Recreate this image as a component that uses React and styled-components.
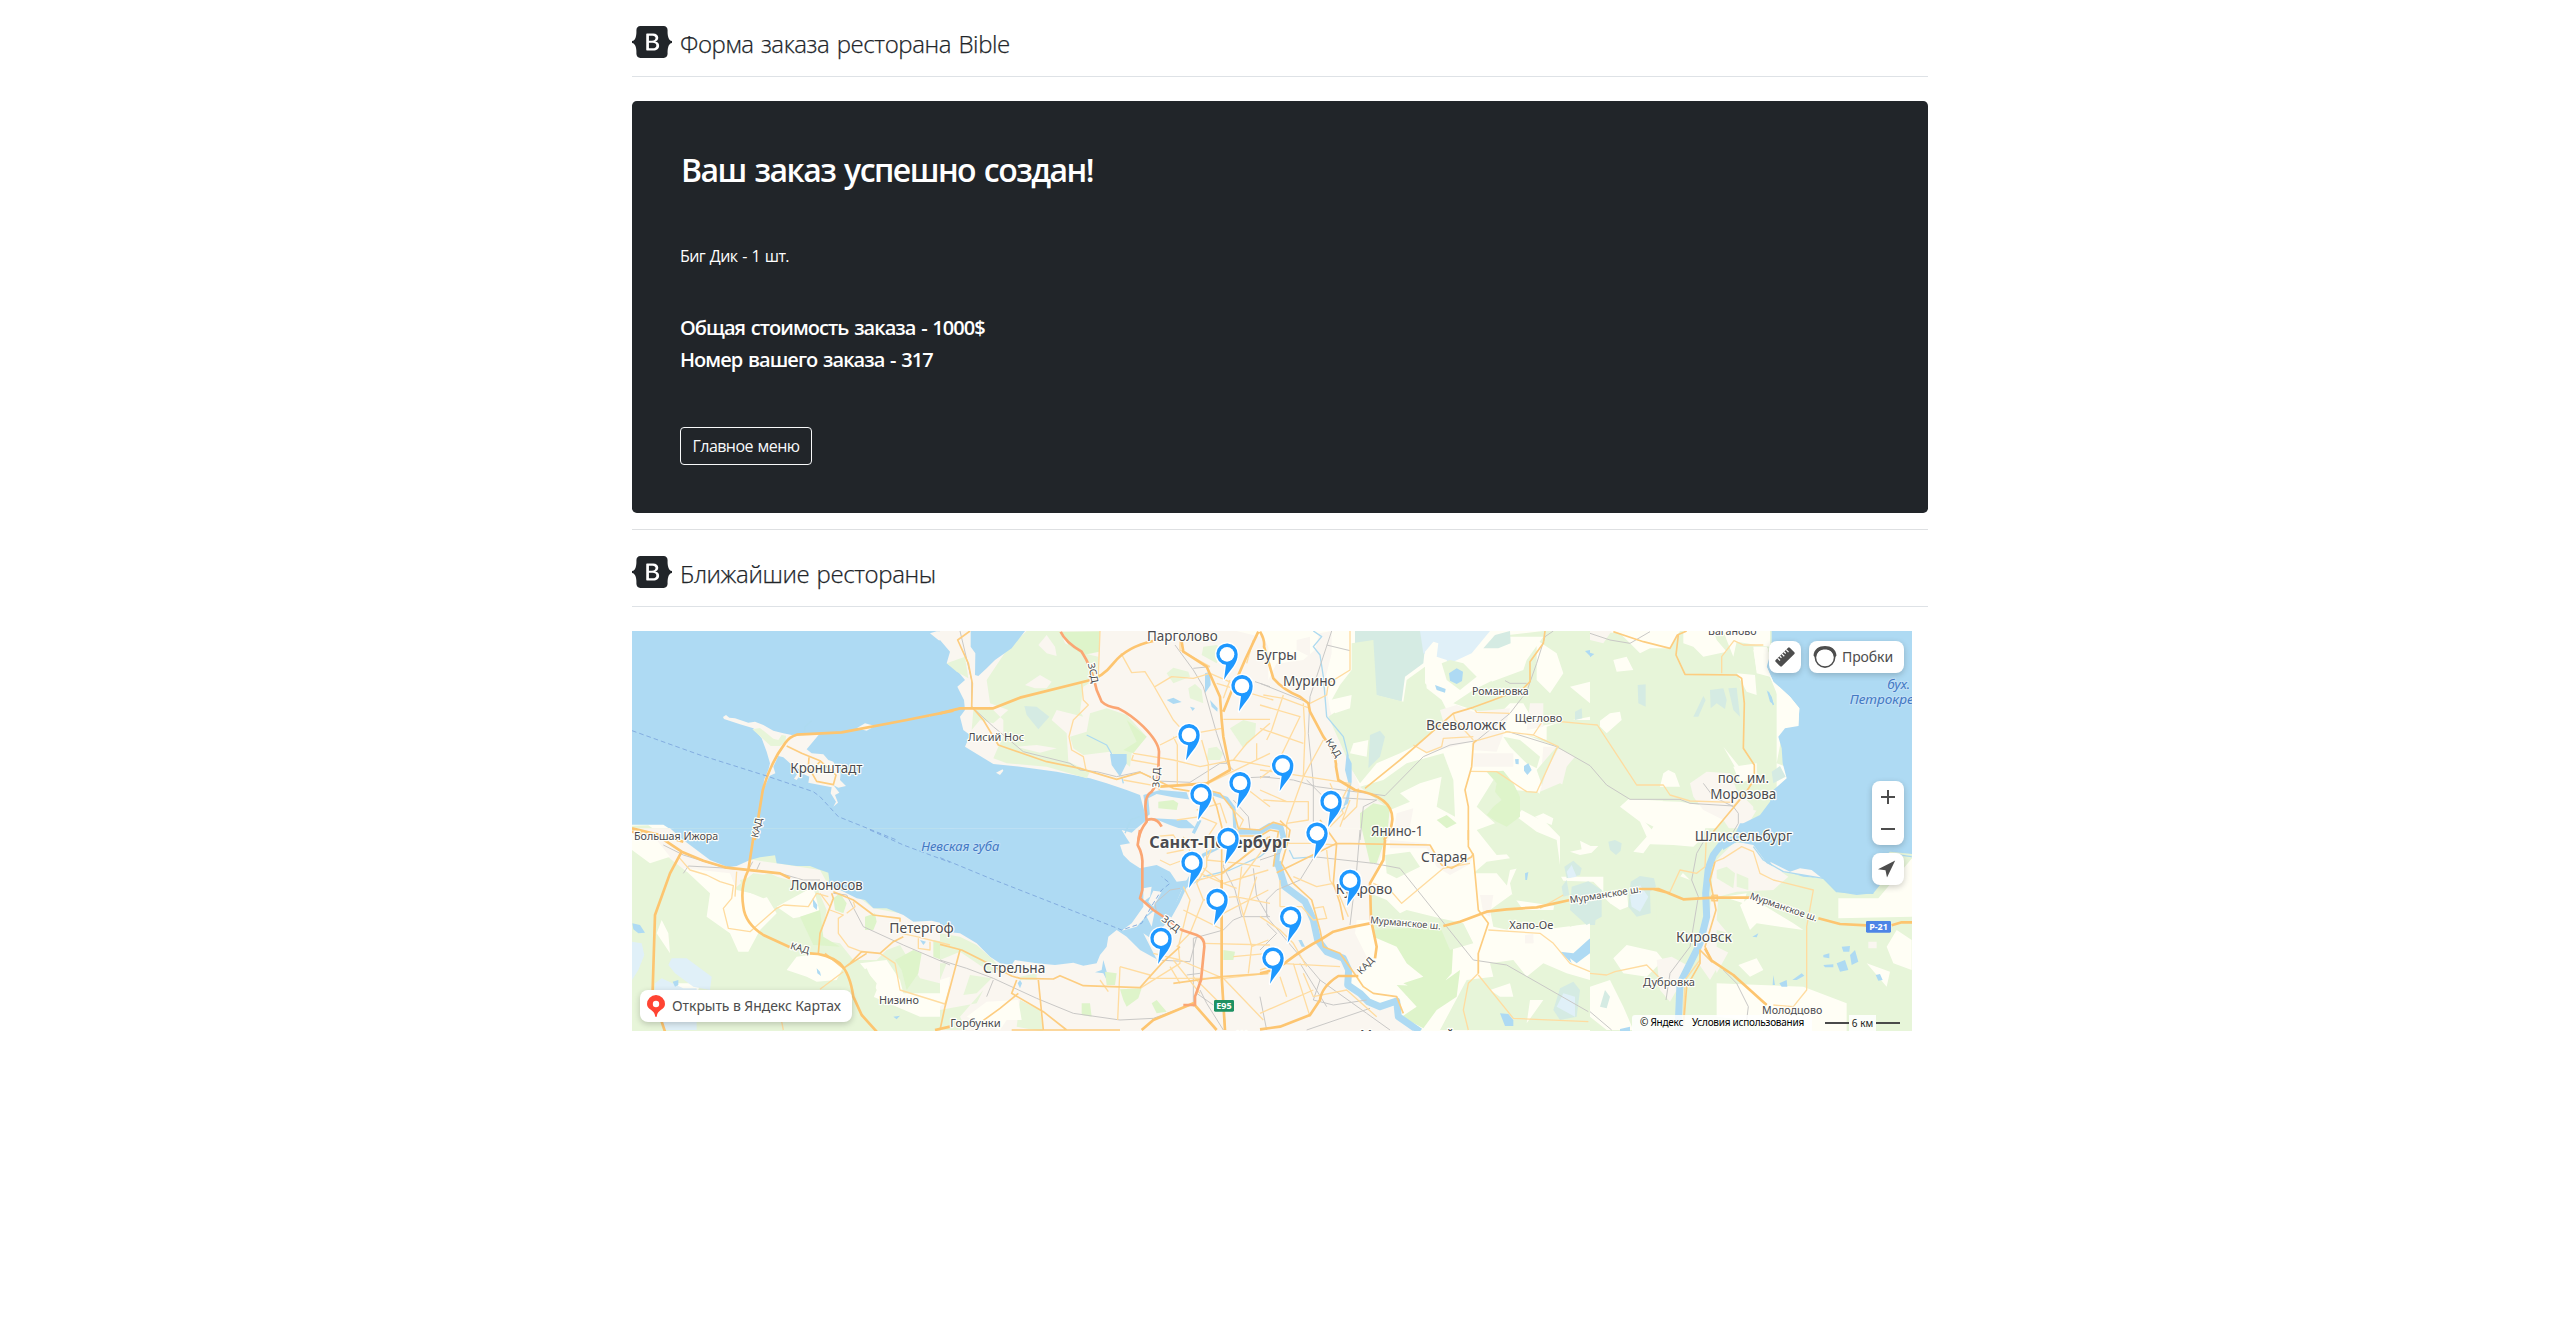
import React from "react";
import styled, { createGlobalStyle } from "styled-components";

const GlobalStyle = createGlobalStyle`
  *, *::before, *::after { box-sizing: border-box; }
  body {
    margin: 0;
    background: #fff;
    color: #212529;
    font-family: "Open Sans", "Noto Sans", sans-serif;
    font-size: 16px;
    line-height: 1.5;
  }
`;

const Container = styled.main`
  width: 1320px;
  margin: 0 auto;
  padding: 24px 12px;
`;

const SectionHeader = styled.header`
  display: flex;
  align-items: center;
  height: 53px;
  margin-bottom: 24px;
  padding-bottom: 16px;
  border-bottom: 1px solid #dee2e6;
`;

const SectionTitle = styled.span`
  padding-top: 3px;
  font-size: 24px;
  font-weight: 350;
  line-height: 36px;
  letter-spacing: ${(p) => p.$tracking};
  word-spacing: 1.5px;
  white-space: nowrap;
  -webkit-text-stroke: 0.25px currentColor;
`;

const LogoSvg = styled.svg`
  display: block;
  width: 40px;
  height: 32px;
  margin-right: 8px;
  fill: currentColor;
`;

const OrderCard = styled.section`
  display: flex;
  flex-direction: column;
  align-items: flex-start;
  height: 412px;
  padding: 48px;
  border-radius: 4.8px;
  background: #212529;
  color: #fff;
`;

const OrderTitle = styled.h2`
  margin: 2px 0 55px 1px;
  font-size: 32px;
  font-weight: 600;
  line-height: 38px;
  letter-spacing: -1.55px;
  word-spacing: 2px;
`;

const OrderItem = styled.p`
  margin: 0 0 48px;
  line-height: 24px;
  letter-spacing: -0.6px;
  word-spacing: 1.2px;
`;

const OrderTotal = styled.h5`
  margin: 0 0 8px;
  font-size: 20px;
  font-weight: 600;
  line-height: 24px;
  letter-spacing: ${(p) => p.$tracking};
  word-spacing: 1.5px;
`;

const MenuButton = styled.button`
  width: 132px;
  height: 38px;
  margin-top: auto;
  padding: 0;
  border: 1px solid #f8f9fa;
  border-radius: 4px;
  background: transparent;
  color: #f8f9fa;
  font: inherit;
  letter-spacing: -0.55px;
  word-spacing: 1px;
  white-space: nowrap;
`;

const Divider = styled.hr`
  height: 1px;
  margin: 16px 0 24px;
  border: 0;
  background: #dee0e2;
`;

const MapFrame = styled.div`
  position: relative;
  width: 1280px;
  height: 400px;
  overflow: hidden;
  font-family: "Noto Sans", sans-serif;
  color: #4d4d4d;
`;

const MapSvg = styled.svg`
  display: block;
  width: 1280px;
  height: 400px;
`;

const Control = styled.button`
  position: absolute;
  top: ${(p) => p.$top}px;
  left: ${(p) => p.$left}px;
  display: flex;
  align-items: center;
  justify-content: ${(p) => (p.$text ? "flex-start" : "center")};
  width: ${(p) => p.$width}px;
  height: ${(p) => p.$height || 32}px;
  padding: ${(p) => (p.$text ? "0 4px" : "0")};
  border: 0;
  border-radius: 8px;
  background: #fff;
  box-shadow: 0 2px 6px rgba(0, 0, 0, 0.2);
  color: #4d4d4d;
  font: 14px/32px "Noto Sans", sans-serif;
  letter-spacing: ${(p) => p.$tracking || 0};
  white-space: nowrap;
`;

const ControlText = styled.span`
  margin-left: ${(p) => p.$gap}px;
`;

const Copyright = styled.div`
  position: absolute;
  right: 100px;
  bottom: 0;
  display: flex;
  gap: 9px;
  width: 180px;
  height: 16px;
  padding-left: 8px;
  border-radius: 3px 0 0 0;
  background: rgba(255, 255, 255, 0.85);
  color: #000;
  font-size: 10px;
  line-height: 15px;
  letter-spacing: -0.25px;
  white-space: nowrap;
`;

const Scale = styled.div`
  position: absolute;
  right: 12px;
  bottom: 0;
  display: flex;
  align-items: center;
  width: 75px;
  height: 16px;
  color: #222;
  font-size: 10px;
  white-space: nowrap;
`;

const ScaleBar = styled.i`
  flex: 1;
  height: 2px;
  background: #4a4a4a;
`;

const ScaleText = styled.span`
  padding: 0 3px;
  background: rgba(255, 255, 255, 0.85);
  line-height: 16px;
`;

const Logo = () => (
  <LogoSvg viewBox="0 0 118 94">
    <path
      fillRule="evenodd"
      clipRule="evenodd"
      d="M24.509 0c-6.733 0-11.715 5.893-11.492 12.284.214 6.14-.064 14.092-2.066 20.577C8.943 39.365 5.547 43.485 0 44.014v5.972c5.547.529 8.943 4.649 10.951 11.153 2.002 6.485 2.28 14.437 2.066 20.577C12.794 88.106 17.776 94 24.51 94H93.5c6.733 0 11.714-5.893 11.491-12.284-.214-6.14.064-14.092 2.066-20.577 2.009-6.504 5.396-10.624 10.943-11.153v-5.972c-5.547-.529-8.934-4.649-10.943-11.153-2.002-6.484-2.28-14.437-2.066-20.577C105.214 5.894 100.233 0 93.5 0H24.508zM80 57.863C80 66.663 73.436 72 62.543 72H44a2 2 0 01-2-2V24a2 2 0 012-2h18.437c9.083 0 15.044 4.92 15.044 12.474 0 5.302-4.01 10.049-9.119 10.88v.277C75.317 46.394 80 51.21 80 57.863zM60.521 28.34H49.948v14.934h8.905c6.884 0 10.68-2.772 10.68-7.727 0-4.643-3.264-7.207-9.012-7.207zM49.948 49.2v16.458H60.91c7.167 0 10.964-2.876 10.964-8.281 0-5.406-3.903-8.178-11.425-8.178H49.948z"
    />
  </LogoSvg>
);

const W = "#aedaf3";
const U = "#faf6f0";
const L = "#fffef5";
const G = "#e7f5d9";
const K = "#def4ca";
const T = "#d5ebe3";
const P = "#e0f0f8";

// Line kinds: colour and width in map units (three units to a pixel).
const WATERWAYS = {
  river: [W, 21],
  neva: [W, 17],
  canal: [W, 10],
  brook: ["#addaf0", 4],
};

const ROADS = {
  rail: ["#c9c8c6", 3],
  minor: ["#ffdca0", 4],
  road: ["#fdcd80", 5],
  main: ["#fdc570", 8],
  toll: ["#fba673", 8],
  ferry: ["#83ade0", 3],
};

// The map is kept in sheets, each with its own offset.
const SHEETS = [
  {
    at: [-36, -33],
    areas: [
      [W, "M30,30H1000V660H30Z"],
      [U, "M309,291L318,285L328,293L345,295L385,308L405,305L430,315L460,332L490,340L515,345L600,340L560,388L575,400L610,403L625,420L640,425L650,445L662,460L660,480L678,498L655,503L640,495L658,518L645,525L654,548L640,560L648,545L632,520L635,502L600,495L565,488L568,470L545,460L530,480L522,476L540,450L510,430L490,412L475,408L460,440L466,460L448,468L430,510L432,480L445,450L450,430L440,395L425,355L400,325L360,313L312,297Z"],
      [G, "M397,328L420,324L440,340L460,356L475,360L485,345L498,347L497,365L480,378L452,378L430,358Z"],
      [U, "M710,325L735,310L765,318L740,332ZM925,287L940,287L937,296Z"],
      [U, "M930,40L950,34H1000V95L980,90L975,70L955,60Z"],
      [G, "M970,132L990,122V142Z"],
      [L, "M30,614H130L170,640L185,662H30Z"],
      [G, "M36,617L85,616L115,637L90,645L36,633Z"],
    ],
    lines: [
      ["ferry", "M36,332L240,405L440,468L580,515L600,530L655,590L830,660"],
      ["main", "M1000,272L860,300L665,337L530,344Q508,350 495,370Q450,430 428,512L404,660"],
      ["road", "M500,378L545,400L600,422L648,465L640,494L590,484L565,440L567,412M575,450L600,425"],
      ["brook", "M553,338L555,320L575,302"],
      ["main", "M36,625L120,645L190,665"],
    ],
  },
  {
    at: [924, -33],
    areas: [
      [U, "M0,30H1000V665H0Z"],
      [W, "M-30,95L0,60L30,95L20,130L50,150L75,180L52,200L72,240L75,270L60,290L70,330L90,345L75,380L160,432L240,440L350,455L450,475L500,490L560,510L600,525L620,600L590,625L550,660H-30Z"],
      [G, "M200,90L260,33H360L375,70L430,100L475,110L470,175L430,200L420,275L430,290L350,270L335,300L380,340L385,425L450,455L440,475L320,440L200,430L160,415L175,380L190,350L190,300L150,260L100,270L95,330L120,300L160,310L205,270L150,250L140,180Z"],
      [U, "M295,75L320,45L345,80L350,108L320,100ZM255,195L300,165L335,185L320,205L285,205ZM228,380L290,375L350,385L300,398Z"],
      [G, "M20,130L75,110L85,175L50,155Z"],
      [W, "M92,33H255L215,85L165,120L140,145L115,168L105,165L106,100L92,80Z"],
      [K, "M365,35L480,34L477,95L430,105L385,75Z"],
      [G, "M390,350L440,335L450,280L500,265L560,285L620,350L575,400L570,440L510,395L430,405L400,385Z"],
      [K, "M560,300L620,350L580,400L550,390L590,365Z"],
      [W, "M510,402L560,402L560,430L540,470L515,435ZM680,240L700,233L725,246L700,252ZM795,160L810,155L812,195L795,220ZM750,260L765,264L758,273ZM810,240L833,265L832,275L815,260Z"],
      [T, "M253,258L290,260L328,290L295,328L260,285Z"],
      [G, "M680,160L700,143L745,155L750,170L700,190ZM745,205L765,192L785,210L790,250L750,235ZM870,325L910,300L948,310L945,350L910,385ZM805,385L830,380L850,400L840,420L800,420ZM790,80L830,75L850,90L830,130L785,105Z"],
      [K, "M655,545L700,540L715,550L710,570L655,565Z"],
      [L, "M890,33H1000V80L960,50Z"],
      [U, "M168,458L188,448L190,452L180,465Z"],
      [W, "M610,525L660,510L740,517L750,545L730,565L690,580L640,575L620,590ZM640,595L740,600L780,635L760,640L690,615Z"],
      [U, "M625,535L650,522L700,532L760,540L765,580L730,590L660,580L630,590ZM635,605L680,620L740,650L640,655Z"],
      [K, "M655,545L700,540L715,550L710,570L655,565Z"],
    ],
    lines: [
      ["brook", "M440,345L470,360L500,375L515,402M545,470L550,490M570,600L600,590M555,640L570,605"],
      ["canal", "M760,640L780,600M815,520L860,535L882,565L885,635"],
      ["rail", "M60,33L95,180V260L160,320L250,395L390,430L420,450L470,455L530,470L600,455L650,483L750,487L840,430L860,430M705,75L760,150L790,200L830,340L860,430L880,450M880,475L990,470M760,145L810,140M880,540L925,590L930,630M945,185L990,200"],
      ["road", "M90,33L53,60L85,130L97,190L95,260L130,300L175,375L320,425L420,445L530,478L600,457L630,470L700,505L790,520"],
      ["minor", "M543,100L575,158L615,155L640,195L700,300L718,320M480,33L475,165M425,190L430,240L445,255L400,300L387,350L395,390L430,410L438,450M645,200L695,170L760,175L810,160L880,190M720,60V90L810,140M660,375L710,350L845,325M580,400L700,420L780,440L880,420L990,440M580,405L575,420L660,435M550,480L660,500L770,495M700,350L712,375V500M785,360L805,430V500M850,298H990M990,310L920,370L880,420M950,370V420M805,490L990,400M850,235L870,180M940,60L920,130M830,190L1000,240M710,600L780,590L830,610L800,655M870,560L910,600L880,660M925,510L990,560M770,570L840,550L860,610M640,495L660,510"],
      ["main", "M0,280L60,265H160L240,233L440,183Q485,175 520,130Q560,80 640,63M725,65L730,95L800,140L840,230L845,300L850,350L870,450L800,490L660,500M955,35L915,120L880,200L850,275"],
      ["road", "M800,490L830,560L840,600L855,660M800,510L840,520L880,570L895,625L960,630L1000,607L1040,618"],
      ["toll", "M362,35Q375,65 425,95Q455,140 470,210L485,245Q500,260 535,265Q575,285 610,320Q655,365 657,395L655,450Q655,490 635,515Q610,530 618,580L620,605Q600,630 595,660"],
      ["toll", "M620,600Q650,590 665,620"],
    ],
  },
  {
    at: [1884, -33],
    areas: [
      [L, "M0,30H1000V665H0Z"],
      [U, "M0,33L25,80V180L50,130L120,50L215,33V100L195,180L210,270L250,390L300,500L350,510L390,560L400,660H0Z"],
      [L, "M50,33H180L165,90L130,120L60,130Z"],
      [T, "M285,33H500L490,130L435,170L425,245L345,225L340,90L285,80Z"],
      [P, "M480,33H690L635,100L580,125L545,130L490,100Z"],
      [G, "M275,70L340,60L350,225L430,245L440,180L495,140L500,205L545,240L570,290L540,340L420,400L350,430L300,490L270,440L250,390L205,290L235,270L215,240L240,195L275,150Z"],
      [L, "M210,240L275,225L270,265L225,280ZM280,370L325,360L320,410L270,400ZM495,95L520,65L535,70L530,110L560,120L595,195L560,210L525,215L495,190Z"],
      [T, "M330,345L360,332L375,350L360,410L325,445Z"],
      [G, "M700,50L850,33H990V290L830,320L790,250L750,250L710,290L640,270L580,250L640,210L700,180L750,140Z"],
      [L, "M695,50H850L800,120L790,150L695,185ZM830,60L890,100L910,160L870,220L830,180ZM930,200L990,185V250Z"],
      [G, "M545,130L570,120L610,130L650,170L600,210L560,180Z"],
      [T, "M670,85L705,45L750,33L752,70L715,85Z"],
      [W, "M567,160L590,145L609,155L606,183L590,192L570,182ZM525,195L557,207L555,218L530,210ZM975,93L990,90V108Z"],
      [T, "M945,275L965,265L967,295L945,300Z"],
      [U, "M540,270L590,255L640,275L750,265L735,330L710,395L635,390V365L500,400L470,380L550,305ZM110,60L150,50L150,110L110,90ZM640,400H760V440L640,440ZM810,250H850V320L800,330ZM410,580L460,565L450,620L400,640ZM850,380H925L910,460L840,500Z"],
      [G, "M300,500L370,480L440,430L550,400L580,480L585,590L530,560L545,470L480,490L420,520L450,545L390,570Z"],
      [K, "M300,580L340,550L390,560L380,660H300ZM530,600L560,585L590,610L560,625Z"],
      [W, "M260,400L275,430L275,485L265,550L250,560L268,500L255,450Z"],
    ],
    lines: [
      ["brook", "M160,33L185,50L160,80L180,105L190,170L200,290L250,350L265,410M225,590L255,560"],
      ["rail", "M215,33L150,230L145,340L160,490V660M200,75L270,92M0,190L150,250M0,470L100,480L170,500L375,527L490,410L570,375L650,362L750,280L800,215L830,130L855,50L880,33M735,182L750,190H800M745,335L890,380L990,437M350,540L310,560L300,660M140,480L190,530L350,540"],
      ["minor", "M270,33V150L205,190L200,225L150,250M70,225L35,330L20,360M0,325L130,370M0,255L120,290L40,455M130,250L135,340L130,470L80,610V660M10,225L70,235L150,265M0,450L40,455L270,490L240,550L190,570M0,510L80,545H145V600L80,610M0,475L60,430M190,360L130,470M210,490L250,580L210,620M270,540L240,620M645,270L650,277L750,280M580,280L585,300L640,360M460,375L500,398L545,380L550,355L640,350M630,454L710,455L800,515L830,517L890,385L895,380L820,345L735,335M820,345L850,300L990,313M640,365L745,335M80,545L10,540M295,505L290,560L250,600"],
      ["road", "M315,505L420,420L580,280L640,262L700,240L790,205L810,185V125L850,70L855,33M650,360L640,370L635,440L615,510L625,560V660"],
      ["main", "M0,35Q15,60 12,80L40,175Q70,210 120,230L145,250L150,275L190,350Q230,400 228,440L235,480L285,510Q400,530 397,600L392,630L372,660"],
    ],
  },
  {
    at: [2874, -33],
    areas: [
      [G, "M0,30H970V665H0Z"],
      [L, "M0,33H270L240,85H180L150,100L90,40ZM280,33H370L380,60L410,95L340,110L310,80L280,70ZM400,33H540V80L500,75L440,65L430,110L410,60ZM490,80L530,80L560,160L630,240L625,318L575,320L600,290L540,170L500,160ZM440,160L495,165L500,225L470,215ZM20,310L60,280L90,275L95,300L50,340ZM70,120L110,110L130,150L80,155ZM210,500L220,460L235,450L255,460L270,500ZM90,560L115,540L270,545L330,555L420,575L370,640L350,660H130L190,640L200,625L150,600Z"],
      [L, "M430,440L500,430L500,470L450,490Z"],
      [U, "M300,490L350,455L420,460L440,510L500,570L470,620L440,660L400,600L340,570L310,530ZM0,33H65L40,70L0,60Z"],
      [L, "M400,380L460,455L440,450Z"],
      [T, "M143,195L167,193V260L145,250ZM360,210L400,205L410,240L405,267L380,250L362,265ZM310,290L340,228L347,240L325,290ZM415,205L440,203L450,290L430,270Z"],
      [W, "M530,210L545,230L552,255L540,245ZM0,98L13,102L0,112Z"],
      [L, "M545,545L560,505L598,472L588,440L560,430L575,350L600,325L633,322V262L606,228L560,185L560,560Z"],
      [W, "M545,33H966V665H440L460,610L510,585L540,545L550,510L590,475L578,430L575,385L565,350L585,325L625,318L628,265L600,230L550,185L530,140L545,90Z"],
      [L, "M490,90L535,85L530,140L550,185L600,230L628,265L625,318L615,313L575,312L600,290L570,245L540,170L500,150Z"],
      [T, "M545,455L570,438L587,470L550,490Z"],
      [G, "M490,540L520,545L515,575L490,570Z"],
    ],
    lines: [
      ["brook", "M535,215L542,232L550,255"],
      ["rail", "M0,40L60,60L120,70L180,35M0,437L50,495L120,538H270L300,550L430,558M340,490L370,530L430,560L445,580V610L430,635"],
      ["minor", "M0,313L22,315L140,495H220L240,525L300,543L430,547M395,160V110L432,62L460,75H520"],
      ["road", "M70,35L160,65L240,85L262,45L290,33M265,45L258,105L285,163L440,165L455,175L463,250L460,385L493,435V475L470,515L370,635"],
      ["minor", "M430,560L500,475"],
    ],
  },
  {
    at: [-36, 597],
    areas: [
      [G, "M30,-5H1000V610H30Z"],
      [U, "M36,-5H160L190,30L320,110L390,88L470,100L600,120L625,165L700,190L760,235L1000,280V470L900,445L840,345L800,360L770,390L700,390L660,340L600,330L620,240L590,170L470,140L400,130L350,170L200,125Z"],
      [L, "M36,0L110,30L150,80L90,100L36,60ZM190,115L330,130L350,180L440,200L470,250L420,300L385,365L355,365L330,310L260,260L270,190ZM470,230L580,170L600,250L520,265ZM500,420L530,380L600,370L670,410L650,450L590,455L560,440ZM720,400L800,390L840,450L850,490L960,490L990,480V560L900,560L760,500L770,460ZM110,310L125,270L145,310L150,370ZM170,460L240,460L235,480L180,480Z"],
      [W, "M150,-5L190,30L230,60L270,90L325,112L350,108L390,90L420,82L465,76L470,100L530,108L570,108L595,118L625,128L628,150L620,170L650,175L680,190L710,205L735,210L760,235L800,235L850,255L880,275L935,272L1000,288V-5Z"],
      [P, "M145,405L155,385H200L275,440L270,480L220,470L165,430ZM36,335L65,340L73,375L55,420L36,450ZM105,460L125,445L190,475H230V600H130L105,500Z"],
      [W, "M37,280L60,285L75,308L55,310L40,298ZM158,455L175,450V465L165,470ZM578,205L592,225L590,240L580,230ZM590,415L600,425L603,438L592,430ZM820,560L840,557L830,568ZM900,330L918,335L910,345Z"],
      [K, "M735,260L765,250L770,275L760,300H735ZM825,390L880,360L905,370L895,430L860,480L845,420ZM940,330L990,340V400L940,380ZM640,205L660,190L680,220L670,250L645,240ZM540,260L600,240L610,320L660,350L580,345Z"],
      [G, "M360,150L450,130L520,165L480,190L430,205L370,180ZM700,440L740,415L770,480L750,530L700,540Z"],
    ],
    lines: [
      ["rail", "M130,45L190,75L320,115L480,130L550,150H600M190,130L205,108L330,115M385,120L398,95M410,120L420,98M640,190L680,195L730,290L850,345L990,405"],
      ["ferry", "M750,0L850,45L990,97"],
      ["minor", "M175,80L210,120L260,135L300,155L340,167L335,205L310,235L325,295L390,305L430,270L470,235L490,225L565,230L590,190L625,200M350,125L345,200M630,240L670,255L655,265V310L685,350L725,365M600,478L670,425M630,230L600,190M680,250L705,230L700,215M780,370L825,400L840,480L975,522L990,470M845,310L890,320L990,345M895,325V355L930,360V335M490,600L485,575L500,550"],
      ["road", "M635,190L640,205L600,310L595,370M640,185L700,210L760,255L840,265V275M615,370L670,415L690,400L725,365L780,370L820,335L850,320M670,415L740,370"],
      ["main", "M36,5L130,28L185,65L250,92L320,113L480,130L510,145M185,65L150,130L105,255L98,480L110,530L135,605M402,10L385,120Q360,170 370,230Q375,280 430,315L510,352M570,370Q620,370 660,400Q690,430 700,500L725,555L770,605M945,600L990,590"],
    ],
  },
  {
    at: [924, 597],
    areas: [
      [U, "M0,-5H1000V610H0Z"],
      [W, "M0,-5H590L575,8L545,0L560,25L570,40L540,45L550,75L570,95L600,115L650,105L690,125L710,155L790,145L755,165L725,180L710,215L690,260L670,290L640,300L640,330L610,310L650,388L600,360L560,320L530,300L505,320L500,350L480,375L470,400L430,407L400,398L345,405L290,400L225,390L215,405L180,400L150,380L110,340L60,310L20,305L0,285Z"],
      [U, "M610,210L635,240L590,290L545,302L575,280L610,230ZM610,175L635,170L630,200L610,215ZM640,182L665,185L640,230L625,215ZM620,260L645,240L635,290ZM515,325L540,335L560,370L520,360Z"],
      [W, "M490,390L500,425L500,450L490,430L465,427L485,420ZM240,450L246,460L240,475L233,460Z"],
      [G, "M0,310L60,320L110,345L160,390L185,420L155,430L60,365L0,390Z"],
      [K, "M495,425L530,430L525,465H500ZM540,478L605,475L595,505L560,530L550,510ZM635,520L650,510L680,545L650,550ZM425,520L450,520L455,560L425,555ZM850,360L885,365L880,390H850Z"],
      [G, "M0,400H20L0,450ZM90,435L155,445L110,490L70,495ZM240,510L300,540L310,605L230,590ZM0,540L110,520L130,480L60,560L80,600H0ZM240,440L290,430L290,450H240Z"],
      [L, "M140,515L235,510L245,570L200,570L180,600L80,560ZM0,450L30,440L20,510L0,530Z"],
    ],
    lines: [
      ["canal", "M690,260L715,215L740,160L790,75L850,45L890,10"],
      ["brook", "M790,140L870,120L960,80L985,60"],
      ["ferry", "M0,83L150,145L520,290L545,300L605,280L640,220L665,180L690,160L665,140"],
      ["rail", "M0,390L80,415L160,445L290,505L400,550L540,570L640,565L750,525M160,450L140,500M880,0L850,110L885,180L905,260L880,270L850,300L760,325V530M905,260H990M650,250L645,220L690,180L720,175M650,390L750,395L770,320M780,430L740,435M780,480L800,520L850,600M940,115L950,200L985,260M770,490L820,525"],
      ["minor", "M660,90L690,105L730,90L770,100L850,160L890,175M540,410L630,435V445H840M540,410L533,570M480,450L505,485M730,170L750,210L715,350L720,400L600,475M640,370L720,390L850,445M800,20V110L770,160L790,210L750,310L710,350M790,210L885,200L990,220M760,155L850,130L985,20M790,340L990,345M905,110L895,200L935,350L925,430M950,140L910,260M850,250L985,180M730,20L780,130L850,160L985,120M830,20L800,90L900,100L960,110M720,460L690,410M700,390L780,490M850,445L985,430M850,445L970,570M850,530L760,440M640,20L700,15L730,60L680,70M935,350L985,330M880,380L985,370M730,240L770,260L850,300M990,30L900,150"],
      ["road", "M0,343L65,360L125,390L215,438L240,445L340,447L360,437L390,450L430,467L600,473L665,400L720,350M230,450L215,490L310,545L380,600M295,450L310,600M0,600L15,530L60,360M540,600L215,600M125,575L180,535L235,490"],
      ["road", "M845,0V440L855,600M990,20L900,90L845,130M700,460L845,440L985,430"],
      ["main", "M845,150V440L855,600M605,600L640,570L760,520L830,600"],
      ["toll", "M600,0L593,45Q610,75 607,110V180L600,205L640,240L685,270L725,300L770,315Q795,325 793,350L783,450L765,500V525L730,525"],
    ],
  },
  {
    at: [1884, 597],
    areas: [
      [L, "M0,-5H1000V610H0Z"],
      [U, "M0,-5H400L370,60L330,170L340,270L290,270L285,310L330,400L270,450L300,500L400,530L425,570L480,605H0Z"],
      [U, "M390,30L500,40L550,100L600,85L640,80L625,105L570,135L530,110L500,55L390,55Z"],
      [K, "M300,-25H385L375,30L350,100L330,100ZM340,270L440,265L540,290L580,340L575,430L540,470L490,490L430,460L490,440L440,400L410,350L340,320ZM410,465L530,470L600,420L590,500L530,540L490,595L425,560L470,530Z"],
      [G, "M375,75L450,65L480,110L410,145L380,130ZM330,190L380,210L420,250L440,240L540,265L610,280L640,340L570,360L540,290L340,300ZM640,130L680,95L750,85L680,0H990V300L840,320L700,290L690,240L760,190L710,130ZM690,400L760,390L800,440L850,400L920,430L990,450V600H540L620,450L700,440Z"],
      [L, "M750,120L850,100L900,140L880,240L790,240L740,170ZM690,480L750,460L760,500L720,500ZM810,510H850L800,580ZM870,30L905,15L895,50Z"],
      [T, "M880,540L900,475L940,455L960,480L950,560L900,570Z"],
      [P, "M890,530L910,490L945,500L945,560Z"],
      [W, "M900,365L940,370L990,325V370L950,400L930,385L935,400ZM720,550L745,552L760,570V588H735ZM115,330L125,330L135,350L125,350Z"],
      [U, "M660,195H700L690,260L670,250ZM795,320L820,315V340H795Z"],
      [L, "M750,290L840,300L1000,280V320L940,345L850,330L760,330L690,360Z"],
      [U, "M795,315L820,312V340H795Z"],
    ],
    lines: [
      ["neva", "M-75,6L0,5L30,-13L62,-8L70,20L52,70L48,110"],
      ["river", "M52,95L75,170L135,215L160,270L173,330L200,365L250,385L266,420L263,465L300,490L325,515L360,530L410,513L415,560L480,605"],
      ["brook", "M88,60L100,85L170,80"],
      ["rail", "M300,0L290,120L270,285M160,80L340,100L420,115L560,290L640,390L740,405L985,545M0,90L60,70M160,85L120,150L50,180L20,210V260L180,450L320,550L390,600M0,500L20,600M180,450L160,510L220,525L320,510M140,600L330,535M0,360L50,310L20,280M120,400L200,530"],
      ["minor", "M85,40H160L230,45M220,160L170,170L100,140M60,230H125L160,270L200,265L190,230L160,235M0,260L60,300L100,340L140,410M0,420L60,400L240,410M130,430L160,500L260,480L350,560M0,550L160,480M60,440L80,500M100,400L150,560M340,160L390,180L425,220L550,115L630,100M685,300L840,310L880,340L930,400L990,425M655,435L760,565L985,575M655,370V430L625,460L610,540L625,600M60,150V230M200,60L210,150L240,200L265,260M840,235L910,195"],
      ["road", "M-75,18L0,18L30,0L55,5L40,110M60,-28L90,0L85,30L65,100L100,160L155,210L180,300L190,350L240,370L290,440L310,470L340,490L410,500L430,550M180,-30L230,40L510,45L545,105L575,115L635,80L640,70M230,40L220,160L240,220L250,270M50,128L230,40"],
      ["road", "M625,0V50L640,75L655,240L685,280L655,370V430"],
      ["main", "M375,30L370,90L330,160L333,270L350,350L345,385M295,438H235Q185,470 180,510L150,555L60,590L0,598M0,430Q50,420 80,395Q140,350 180,330L220,305L270,292L330,280M550,288L600,275L680,245L740,238L830,232L930,210"],
    ],
  },
  {
    at: [2874, 597],
    areas: [
      [G, "M0,-5H970V610H0Z"],
      [L, "M170,20L200,-25H350L340,20L310,50L250,45L160,42ZM70,385L110,345L200,365L220,390L170,440L100,430ZM450,225L480,200L610,280L640,300L500,280L480,300ZM400,200L470,190L460,220ZM745,205H865L970,80V260L745,265ZM445,405L500,385L520,420L480,440ZM380,460L640,470L770,520V605H550L470,570L380,560ZM830,400L900,425L890,470ZM0,470L60,450L100,530L130,600H50L0,560ZM95,106L200,104L270,120L300,150L200,112ZM890,350L920,300L965,330V420L910,400Z"],
      [U, "M370,100L430,40L500,35L530,95L595,140L550,180L440,185L385,200L380,270L430,330L360,450L325,400L340,330L360,250ZM200,390L245,380L300,410L240,515L210,480ZM835,335L860,335V355H835ZM360,350L430,340L380,430Z"],
      [G, "M380,120L410,110L435,130L430,175L380,145ZM440,130L475,145V180L440,170ZM380,300L420,310L440,380L380,350Z"],
      [T, "M55,40L90,30L95,65L65,75ZM0,230L20,240L15,285H0ZM30,530L45,480L60,500L50,535Z"],
      [W, "M390,40L430,22L450,-20H966V72L900,65L860,100L870,165L850,190L800,195L740,185L700,145L640,140L560,115L530,100L490,45L440,35L400,60Z"],
      [U, "M540,95L600,125L630,115L665,120L700,148L640,135L560,125Z"],
      [W, "M755,350L780,348L778,365L760,365ZM780,375L795,360L805,395L785,405ZM740,400L765,390L775,420L750,425ZM700,375L718,370V385L700,382ZM700,405L730,403V412H705ZM857,435L870,432L878,450L865,452ZM607,450L635,430L643,437L620,450ZM550,435L555,465H548ZM568,460L590,450L592,470H575ZM487,320L505,310L500,322ZM90,597L120,590V605H90Z"],
    ],
    lines: [
      ["river", "M450,22L395,42L370,75L355,115L347,190L350,260L330,340L300,400L270,460L264,600"],
      ["rail", "M355,10L320,70L305,150L325,200L300,350L240,430L228,510M400,420L440,460L475,530L470,570M0,545L65,600"],
      ["minor", "M350,0L345,110L320,130L270,120L240,185M375,95L400,85L455,50L490,65L510,130L550,150L670,180L650,290V480L610,530L550,525M0,430L50,435L75,425L170,405L215,450M330,390L285,450L280,570"],
      ["brook", "M490,50L520,90L580,125L700,145L740,185L850,190M890,70L965,80"],
      ["road", "M375,95L360,150L378,240L345,350L365,395L330,360L330,400L290,470L280,590"],
      ["main", "M145,177H205L280,208L370,203H480M190,177L240,190M685,265L750,282L830,286M905,286L935,277H966M345,355L365,392L430,435L530,525"],
      ["road", "M366,196H382V212H366Z"],
    ],
  },
  // Forest and lakes between Vsevolozhsk and Shlisselburg.
  {
    at: [2244, 267],
    areas: [
      [G, "M500,20L560,0H660V250H720L780,300L825,345L790,400L950,405L900,470L830,510V600H640L570,620L540,560L400,540L390,490L430,400L350,405L290,330L345,310L290,260L340,180L400,210L470,215L500,235L470,150L530,80L440,45L500,60Z"],
      [G, "M370,50L420,60L480,110L470,145L440,130L390,80Z"],
      [L, "M720,260L745,238L850,242L790,300L830,345L790,400L760,395L800,350L780,305ZM425,270L500,310L540,350V435L530,360L470,335L410,290ZM465,290L490,280L520,295L515,315L490,305ZM460,225L500,245L480,235ZM570,395L605,388L600,362L632,378H655L635,398L600,405Z"],
      [U, "M535,85L585,110L560,140L545,200L480,215L500,150Z"],
      [G, "M480,215L540,190L560,200L545,240L500,255L475,240Z"],
      [K, "M320,155L370,152L400,190L420,230V290L380,320L350,305L320,285L340,260L365,240L345,215L350,190Z"],
      [L, "M543,470H670V515L640,485L550,482Z"],
      [L, "M670,530L740,505L745,560L720,570L690,550Z"],
      [T, "M685,365L705,360L725,370L722,392L708,405L690,390ZM553,440L580,422L605,445L600,465L560,475ZM545,500L560,480L568,525L550,530ZM575,500L625,484L665,510V590L620,615L570,570ZM752,485L780,468L822,475L828,500L810,515L812,580L770,590L745,560Z"],
      [P, "M560,455L575,435L590,470L565,475ZM750,530L780,495L805,530L780,575L755,560Z"],
      [W, "M405,118L416,117V133L407,132ZM432,138L445,130L455,150L442,165L432,152ZM435,460L445,456L441,480H436Z"],
    ],
    lines: [],
  },
];

// [x, baseline, text, size, length, options]
const LABELS = [
  [475, 426, "Кронштадт", 42, 216],
  [6, 628, "Большая Ижора", 34, 253],
  [378, 622, "КАД", 29, 60, { turn: -78 }],
  [1008, 330, "Лисий Нос", 34, 168],
  [1545, 30, "Парголово", 42, 212],
  [1367, 98, "ЗСД", 29, 61, { turn: 78 }],
  [1582, 470, "ЗСД", 29, 60, { turn: -88 }],
  [1872, 88, "Бугры", 42, 123],
  [1953, 164, "Мурино", 42, 158],
  [2080, 331, "КАД", 29, 60, { turn: 57 }],
  [2520, 192, "Романовка", 31, 170],
  [2648, 272, "Щеглово", 34, 143],
  [2382, 296, "Всеволожск", 42, 240],
  [2217, 615, "Янино-1", 42, 157],
  [3228, 13, "Ваганово", 31, 146],
  [3257, 455, "пос. им.", 42, 154],
  [3235, 504, "Морозова", 42, 198],
  [3188, 629, "Шлиссельбург", 42, 292],
  [3766, 175, "бух.", 39, 69, { water: true }],
  [3653, 219, "Петрокрепость", 39, 312, { water: true }],
  [868, 660, "Невская губа", 39, 234, { water: true }],
  [1552, 651, "Санкт-Петербург", 50, 421, { bold: true }],
  [475, 778, "Ломоносов", 42, 217],
  [772, 907, "Петергоф", 42, 193],
  [473, 953, "КАД", 29, 58, { turn: 16 }],
  [741, 1118, "Низино", 32, 120],
  [1053, 1027, "Стрельна", 42, 187],
  [955, 1188, "Горбунки", 32, 151],
  [1587, 868, "ЗСД", 29, 60, { turn: 38 }],
  [2367, 692, "Старая", 42, 139],
  [2111, 788, "Кудрово", 42, 170],
  [2214, 877, "Мурманское ш.", 29, 212, { turn: 5 }],
  [2188, 1032, "КАД", 29, 58, { turn: -47 }],
  [2632, 893, "Хапо-Ое", 32, 132],
  [2815, 817, "Мурманское ш.", 29, 216, { turn: -9 }],
  [3352, 803, "Мурманское ш.", 29, 212, { turn: 19 }],
  [3132, 932, "Кировск", 42, 168],
  [3033, 1066, "Дубровка", 34, 156],
  [3390, 1148, "Молодцово", 34, 181],
  [1812, 1227, "Шушары", 40, 150],
  [2184, 1226, "Металлострой", 42, 283],
];

const PINS = [
  [1785, 70], [1830, 165], [1671, 312], [1824, 456], [1707, 491],
  [1788, 623], [1680, 695], [1755, 806], [1587, 923], [1952, 404],
  [2097, 512], [2055, 607], [2154, 749], [1976, 859], [1923, 982],
];

const place = ([x, y]) => `translate(${x} ${y})`;

const LineLayer = ({ kind, color, width }) => (
  <g
    fill="none"
    stroke={color}
    strokeWidth={width}
    strokeLinejoin="round"
    strokeDasharray={kind === "ferry" ? "14 9" : undefined}
  >
    {SHEETS.map((s, i) => (
      <g key={i} transform={place(s.at)}>
        {s.lines.filter((l) => l[0] === kind).map((l, n) => <path key={n} d={l[1]} />)}
      </g>
    ))}
  </g>
);

const Label = ({ x, y, text, size, length, turn, water, bold }) => (
  <text
    x={x}
    y={y}
    fontSize={size}
    textLength={length}
    lengthAdjust="spacingAndGlyphs"
    fontWeight={bold ? 700 : 400}
    fontStyle={water ? "italic" : "normal"}
    fill={water ? "#4379c4" : "#4b4b4f"}
    stroke={water ? "#bfdff5" : "#fffffa"}
    strokeWidth="7"
    strokeLinejoin="round"
    paintOrder="stroke"
    transform={turn ? `rotate(${turn} ${x} ${y})` : undefined}
  >
    {text}
  </text>
);

const Shield = ({ x, y, width, color, children }) => (
  <g>
    <rect x={x} y={y} width={width} height="35" rx="4" fill={color} />
    <text x={x + width / 2} y={y + 27} fontSize="27" fontWeight="700" fill="#fff" textAnchor="middle">
      {children}
    </text>
  </g>
);

const Pin = ({ at }) => (
  <g transform={place(at)}>
    <path
      d="M-9,76L-3,31A32,32 0 1 1 32,0C32,29 12,43 -9,76Z"
      fill="#1e98ff"
      stroke="#fff"
      strokeWidth="8"
      strokeLinejoin="round"
      paintOrder="stroke"
    />
    <circle r="22" fill="#fff" />
  </g>
);

const RestaurantMap = () => (
  <MapSvg viewBox="0 0 3840 1200">
    {SHEETS.map((s, i) => (
      <g key={i} transform={place(s.at)}>
        {s.areas.map(([fill, d], n) => <path key={n} d={d} fill={fill} />)}
      </g>
    ))}
    {Object.entries({ ...WATERWAYS, ...ROADS }).map(([kind, [color, width]]) => (
      <LineLayer key={kind} kind={kind} color={color} width={width} />
    ))}
    {LABELS.map(([x, y, text, size, length, opts]) => (
      <Label key={`${x}-${y}`} x={x} y={y} text={text} size={size} length={length} {...opts} />
    ))}
    <Shield x={1746} y={1107} width={60} color="#1d9163">E95</Shield>
    <Shield x={3702} y={870} width={75} color="#4d85e6">Р-21</Shield>
    {PINS.map((at) => <Pin key={at.join()} at={at} />)}
  </MapSvg>
);

const RulerIcon = () => (
  <svg width="20" height="20" viewBox="-10 -10 20 20">
    <g transform="rotate(-45)">
      <rect x="-10" y="-4.4" width="20" height="8.8" rx="1.2" fill="#4d4d4d" />
      <path d="M-6,-4.4V-1M-3,-4.4V-2M0,-4.4V-1M3,-4.4V-2M6,-4.4V-1" stroke="#fff" strokeWidth="1.2" />
    </g>
  </svg>
);

const TrafficIcon = () => (
  <svg width="24" height="24" viewBox="0 0 24 24">
    <circle cx="12" cy="12.5" r="9.6" fill="none" stroke="#4d4d4d" strokeWidth="1.6" />
    <path d="M.5,10.5C1,4 6,1 12,1S23,4 23.5,10.5L21.5,13C20.5,7 17,4.5 12,4.5S3.5,7 2.5,13Z" fill="#4d4d4d" />
  </svg>
);

const ZoomIcon = () => (
  <svg width="16" height="48" viewBox="0 0 16 48" fill="none" stroke="#4d4d4d" strokeWidth="2">
    <path d="M1,8H15M8,1V15M1,40H15" />
  </svg>
);

const LocateIcon = () => (
  <svg width="20" height="18" viewBox="1 0 20 18" fill="#4d4d4d">
    <path d="M18.2.5L1,9.2L8.5,10.2L10,17.5Z" />
  </svg>
);

const PlaceIcon = () => (
  <svg width="18" height="22" viewBox="0 0 18 22">
    <path d="M9,0A9,9 0 0 0 0,9C0,15 7.6,14.6 8.2,21.2A.8,.8 0 0 0 9.8,21.2C10.4,14.6 18,15 18,9A9,9 0 0 0 9,0Z" fill="#ff4433" />
    <circle cx="9" cy="9" r="3.2" fill="#fff" />
  </svg>
);

export default function App() {
  return (
    <>
      <GlobalStyle />
      <Container>
        <SectionHeader>
          <Logo />
          <SectionTitle $tracking="-0.4px">Форма заказа ресторана Bible</SectionTitle>
        </SectionHeader>
        <OrderCard>
          <OrderTitle>Ваш заказ успешно создан!</OrderTitle>
          <OrderItem>Биг Дик - 1 шт.</OrderItem>
          <OrderTotal $tracking="-0.95px">Общая стоимость заказа - 1000$</OrderTotal>
          <OrderTotal $tracking="-0.95px">Номер вашего заказа - 317</OrderTotal>
          <MenuButton>Главное меню</MenuButton>
        </OrderCard>
        <Divider />
        <SectionHeader>
          <Logo />
          <SectionTitle $tracking="-0.4px">Ближайшие рестораны</SectionTitle>
        </SectionHeader>
        <MapFrame>
          <RestaurantMap />
          <Control $left={1137} $top={10} $width={32}><RulerIcon /></Control>
          <Control $left={1177} $top={10} $width={95} $text $tracking="-0.1px">
            <TrafficIcon />
            <ControlText $gap={5}>Пробки</ControlText>
          </Control>
          <Control $left={1240} $top={150} $width={32} $height={64}><ZoomIcon /></Control>
          <Control $left={1240} $top={222} $width={32}><LocateIcon /></Control>
          <Control $left={8} $top={359} $width={212} $text $tracking="-0.07px">
            <ControlText $gap={3} />
            <PlaceIcon />
            <ControlText $gap={7}>Открыть в Яндекс Картах</ControlText>
          </Control>
          <Copyright>
            <span>© Яндекс</span>
            <span>Условия использования</span>
          </Copyright>
          <Scale>
            <ScaleBar />
            <ScaleText>6 км</ScaleText>
            <ScaleBar />
          </Scale>
        </MapFrame>
      </Container>
    </>
  );
}
